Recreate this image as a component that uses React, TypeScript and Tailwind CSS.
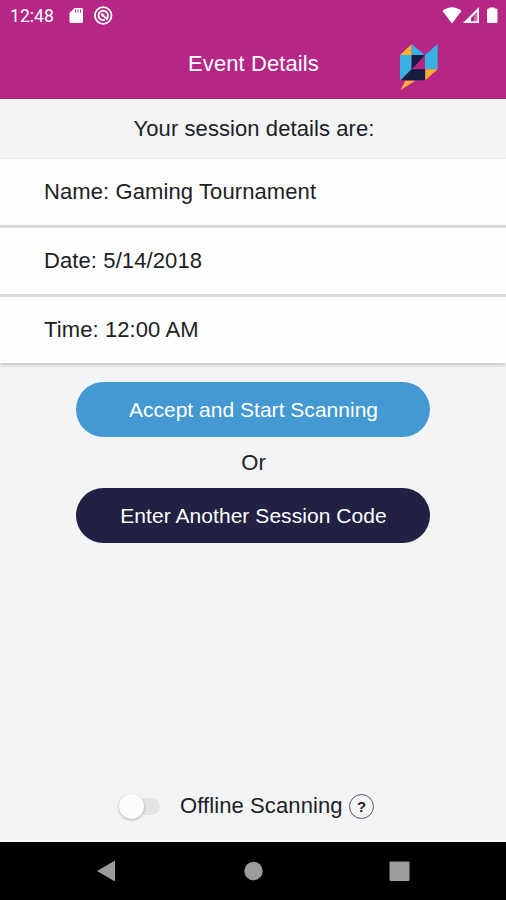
import type { ReactNode } from "react";

function StatusBar() {
  return (
    <div className="flex h-8 items-center text-white">
      <span className="ml-[10px] w-[58px] font-['Roboto',sans-serif] text-[17.6px] leading-8">12:48</span>
      <svg className="h-8 w-12" viewBox="68 0 48 32" fill="none">
        <path d="M74.5 8H81.5Q83 8 83 9.5V21.5Q83 23 81.5 23H71Q69.500 23 69.500 21.500V13Z" fill="#fff" />
        <path d="M75.500 9.500V12.500M78 9.500V12.500M80.500 9.500V12.500" stroke="#b52685" strokeWidth="1" />
        <circle cx="103.200" cy="15.500" r="8.300" stroke="#fff" strokeWidth="1.800" />
        <path d="M104.800 19.800A4.700 4.700 0 1 1 107.900 15.500Q107.900 17.500 106.800 19L101.500 14" stroke="#fff" strokeWidth="1.900" />
        <path d="M101 13.500L104.500 14L102 17Z" fill="#fff" />
      </svg>
      <svg className="ml-auto h-8 w-[66px]" viewBox="440 0 66 32" fill="none">
        <path d="M442.500 11Q452 3.500 461.500 11L452 23.500Z" fill="#fff" />
        <path fillRule="evenodd" d="M463 23L479 7V23ZM471 21.200H477.200V12L471 18Z" fill="#fff" />
        <path d="M474 21.500V16.500L477 13V21.500Z" fill="#fff" fillOpacity=".35" />
        <path d="M489.500 7.500H494.500V8.500H496Q497.500 8.500 497.500 10V21.500Q497.500 23 496 23H488.500Q487 23 487 21.500V10Q487 8.500 488.500 8.500H489.500Z" fill="#fff" />
      </svg>
    </div>
  );
}

function Logo() {
  return (
    <svg className="h-[50px] w-10" viewBox="69 126 120 150">
      <path d="M72 165L107 132V165Z" fill="#fbb034" />
      <path d="M107 132L147 165H107ZM72 165H107V208L72 241ZM147 165L185 132V208H147Z" fill="#38b0e3" />
      <path d="M107 165H147L107 208ZM107 208H147V241H75Z" fill="#151d42" />
      <path d="M148 208H185L148 241ZM88 242H118L74 270Z" fill="#fbb034" />
    </svg>
  );
}

function DetailRow({ children }: { children: ReactNode }) {
  return <div className="flex h-[66px] items-center bg-[#fefefe] pl-11 tracking-[0.1px]">{children}</div>;
}

export default function App() {
  return (
    <div className="flex h-[900px] w-[506px] flex-col bg-[#f2f4f6] font-['Liberation_Sans',Arial,sans-serif] text-[22px] leading-[26px] text-[#202124]">
      <header className="h-[99px] border-b border-[#a51d77] bg-[#b52685]">
        <StatusBar />
        <div className="grid h-[66px] grid-cols-[1fr_132px_1fr] text-white">
          <h1 className="col-start-2 mt-[19px] pl-px text-center tracking-[0.1px] whitespace-nowrap">Event Details</h1>
          <div className="pt-[10px] pl-[80px]"><Logo /></div>
        </div>
      </header>
      <div className="flex h-[60px] items-center justify-center border-t border-b border-t-[#fafafa] border-b-[#e9ebed] pl-[2px] tracking-[0.08px]">
        Your session details are:
      </div>
      <section className="flex flex-col gap-[3px] bg-[#dadada] shadow-[0_2px_4px_rgba(0,0,0,0.2)]">
        <DetailRow>Name: Gaming Tournament</DetailRow>
        <DetailRow>Date: 5/14/2018</DetailRow>
        <DetailRow>Time: 12:00 AM</DetailRow>
      </section>
      <main className="flex flex-1 flex-col items-center border-b-2 border-[#fcfcfc] pt-[19px]">
        <button className="h-[55px] w-[354px] rounded-full bg-[#4499d3] pl-px text-[21px] tracking-[0.02px] text-white">
          Accept and Start Scanning
        </button>
        <div className="flex h-[51px] items-center pl-px">Or</div>
        <button className="h-[55px] w-[354px] rounded-full bg-[#202143] pl-px text-[21px] tracking-[0.06px] text-white">
          Enter Another Session Code
        </button>
        <div className="mt-auto mr-[13px] mb-[21px] flex h-[26px] w-[255px] items-center">
          <div className="flex h-[17px] w-[41px] items-center rounded-full bg-[#e3e4e5]">
            <div className="size-[25px] shrink-0 rounded-full bg-[#fcfcfc] shadow-[0_1px_3px_rgba(0,0,0,0.28)]" />
          </div>
          <span className="ml-5 tracking-[0.1px] whitespace-nowrap">Offline Scanning</span>
          <span className="ml-auto flex size-[25px] items-center justify-center rounded-full border border-[#55575a] text-[15px] leading-none font-bold">?</span>
        </div>
      </main>
      <nav className="h-[58px] bg-black">
        <svg className="h-full w-full" viewBox="0 842 506 58" fill="#9c9c9c">
          <path d="M97 871L115 860.500V881.500Z" />
          <circle cx="253.500" cy="871" r="9.200" />
          <rect x="389.500" y="861.500" width="20" height="19.500" rx="1" />
        </svg>
      </nav>
    </div>
  );
}
